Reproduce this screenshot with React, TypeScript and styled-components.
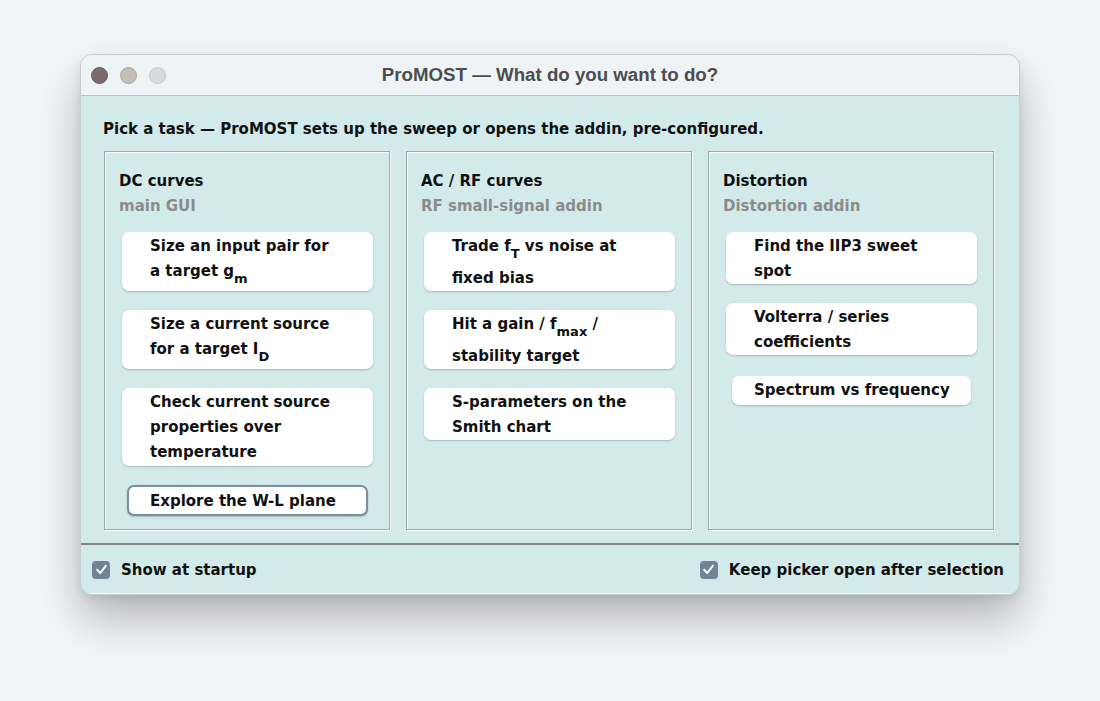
import React from "react";
import styled, { createGlobalStyle } from "styled-components";

const Global = createGlobalStyle`
  html, body { margin: 0; padding: 0; background: #f4f5f7; }
  #root { height: 701px; }
`;

const FONT = `"DejaVu Sans", "Open Sans", sans-serif`;

const Stage = styled.div`
  height: 701px;
  box-sizing: border-box;
  padding: 54px 0 0 80px;
`;

const Window = styled.div`
  width: 940px;
  height: 541px;
  box-sizing: border-box;
  border-radius: 12px;
  overflow: hidden;
  background: #d2ebea;
  border: 1px solid #c6ccd0;
  box-shadow: 0 24px 44px rgba(0, 0, 0, 0.26), 0 4px 10px rgba(0, 0, 0, 0.08);
  display: flex;
  flex-direction: column;
  font-family: ${FONT};
  color: #111;
`;

const TitleBar = styled.div`
  height: 40px;
  flex: none;
  background: #eef3f5;
  border-bottom: 1px solid #b3c2c4;
  display: flex;
  align-items: center;
  position: relative;
  padding-left: 10px;
  gap: 12px;
`;

const Light = styled.span<{ $c: string; $b: string }>`
  width: 17px;
  height: 17px;
  border-radius: 50%;
  background: ${(p) => p.$c};
  box-sizing: border-box;
  border: 1px solid ${(p) => p.$b};
`;

const Title = styled.div`
  position: absolute;
  left: 0;
  right: 0;
  text-align: center;
  font-family: "Liberation Sans", Arial, sans-serif;
  font-weight: 700;
  font-size: 18.7px;
  color: #4b4d50;
  pointer-events: none;
`;

const Body = styled.div`
  flex: 1;
  display: flex;
  flex-direction: column;
  padding: 21px 25px 0 22px;
`;

const Intro = styled.div`
  font-size: 15px;
  font-weight: 700;
  line-height: 25px;
  margin-bottom: 9px;
`;

const Columns = styled.div`
  display: grid;
  grid-template-columns: repeat(3, 286px);
  gap: 16px;
  height: 379px;
  margin-left: 1px;
`;

const Panel = styled.div`
  box-sizing: border-box;
  border: 1px solid #9ea9a9;
  box-shadow: inset 1px 1px 0 #ffffff, 1px 1px 0 #ffffff;
  padding: 17px 16px 0 14px;
  display: flex;
  flex-direction: column;
`;

const Heading = styled.div`
  font-size: 15px;
  font-weight: 700;
  line-height: 25px;
`;

const Sub = styled.div`
  font-size: 15px;
  font-weight: 700;
  line-height: 25px;
  color: #8b8b8b;
  margin-bottom: 13px;
`;

const Buttons = styled.div`
  display: flex;
  flex-direction: column;
  align-items: center;
  gap: 19px;
  padding-left: 3px;
`;

const TaskButton = styled.button<{ $w: number; $pl: number; $pb?: number; $mt?: number; $focus?: boolean }>`
  width: ${(p) => p.$w}px;
  box-sizing: border-box;
  margin-top: ${(p) => p.$mt ?? 0}px;
  padding: 2px 0 ${(p) => p.$pb ?? 0}px ${(p) => p.$pl}px;
  background: #ffffff;
  border: ${(p) => (p.$focus ? "2px solid #7b8fa3" : "none")};
  border-radius: 7px;
  box-shadow: 0 1px 2px rgba(0, 0, 0, 0.22);
  text-align: left;
  font-family: ${FONT};
  font-size: 15px;
  font-weight: 700;
  line-height: 25px;
  color: #111;
  white-space: nowrap;
  cursor: pointer;
`;

const Sb = styled.sub`
  font-size: 13px;
  line-height: 25px;
  vertical-align: -7px;
`;

const Footer = styled.div`
  height: 51px;
  flex: none;
  box-sizing: border-box;
  border-top: 2px solid #7f8485;
  border-bottom: 1px solid #f4fbfb;
  display: flex;
  align-items: center;
  justify-content: space-between;
  padding: 1px 15px 0 11px;
`;

const Check = styled.label`
  display: flex;
  align-items: center;
  gap: 11px;
  font-size: 15px;
  font-weight: 700;
`;

const Box = styled.span`
  width: 18px;
  height: 18px;
  border-radius: 4px;
  background: #6f8499;
  display: flex;
  align-items: center;
  justify-content: center;
`;

const Tick = () => (
  <svg width="13" height="13" viewBox="0 0 13 13">
    <path d="M2.2 6.8 L5.2 10 L10.8 2.8" fill="none" stroke="#fff" strokeWidth="2" strokeLinecap="round" strokeLinejoin="round" />
  </svg>
);

const Checkbox = ({ label }: { label: string }) => (
  <Check>
    <Box>
      <Tick />
    </Box>
    {label}
  </Check>
);

export default function App() {
  return (
    <>
      <Global />
      <Stage>
        <Window>
          <TitleBar>
            <Light $c="#7b6c6c" $b="#6b5d5d" />
            <Light $c="#c4bfb6" $b="#aaa59c" />
            <Light $c="#d9dadb" $b="#c7c8c9" />
            <Title>ProMOST — What do you want to do?</Title>
          </TitleBar>
          <Body>
            <Intro>Pick a task — ProMOST sets up the sweep or opens the addin, pre-configured.</Intro>
            <Columns>
              <Panel>
                <Heading>DC curves</Heading>
                <Sub>main GUI</Sub>
                <Buttons>
                  <TaskButton $w={251} $pl={28}>
                    Size an input pair for
                    <br />a target g<Sb>m</Sb>
                  </TaskButton>
                  <TaskButton $w={251} $pl={28}>
                    Size a current source
                    <br />
                    for a target I<Sb>D</Sb>
                  </TaskButton>
                  <TaskButton $w={251} $pl={28} $pb={1}>
                    Check current source
                    <br />
                    properties over
                    <br />
                    temperature
                  </TaskButton>
                  <TaskButton $w={241} $pl={21} $focus>
                    Explore the W-L plane
                  </TaskButton>
                </Buttons>
              </Panel>
              <Panel>
                <Heading>AC / RF curves</Heading>
                <Sub>RF small-signal addin</Sub>
                <Buttons>
                  <TaskButton $w={251} $pl={28}>
                    Trade f<Sb>T</Sb> vs noise at
                    <br />
                    fixed bias
                  </TaskButton>
                  <TaskButton $w={251} $pl={28}>
                    Hit a gain / f<Sb>max</Sb> /
                    <br />
                    stability target
                  </TaskButton>
                  <TaskButton $w={251} $pl={28}>
                    S-parameters on the
                    <br />
                    Smith chart
                  </TaskButton>
                </Buttons>
              </Panel>
              <Panel>
                <Heading>Distortion</Heading>
                <Sub>Distortion addin</Sub>
                <Buttons>
                  <TaskButton $w={251} $pl={28}>
                    Find the IIP3 sweet
                    <br />
                    spot
                  </TaskButton>
                  <TaskButton $w={251} $pl={28}>
                    Volterra / series
                    <br />
                    coefficients
                  </TaskButton>
                  <TaskButton $w={239} $pl={22} $pb={2} $mt={2}>
                    Spectrum vs frequency
                  </TaskButton>
                </Buttons>
              </Panel>
            </Columns>
          </Body>
          <Footer>
            <Checkbox label="Show at startup" />
            <Checkbox label="Keep picker open after selection" />
          </Footer>
        </Window>
      </Stage>
    </>
  );
}
